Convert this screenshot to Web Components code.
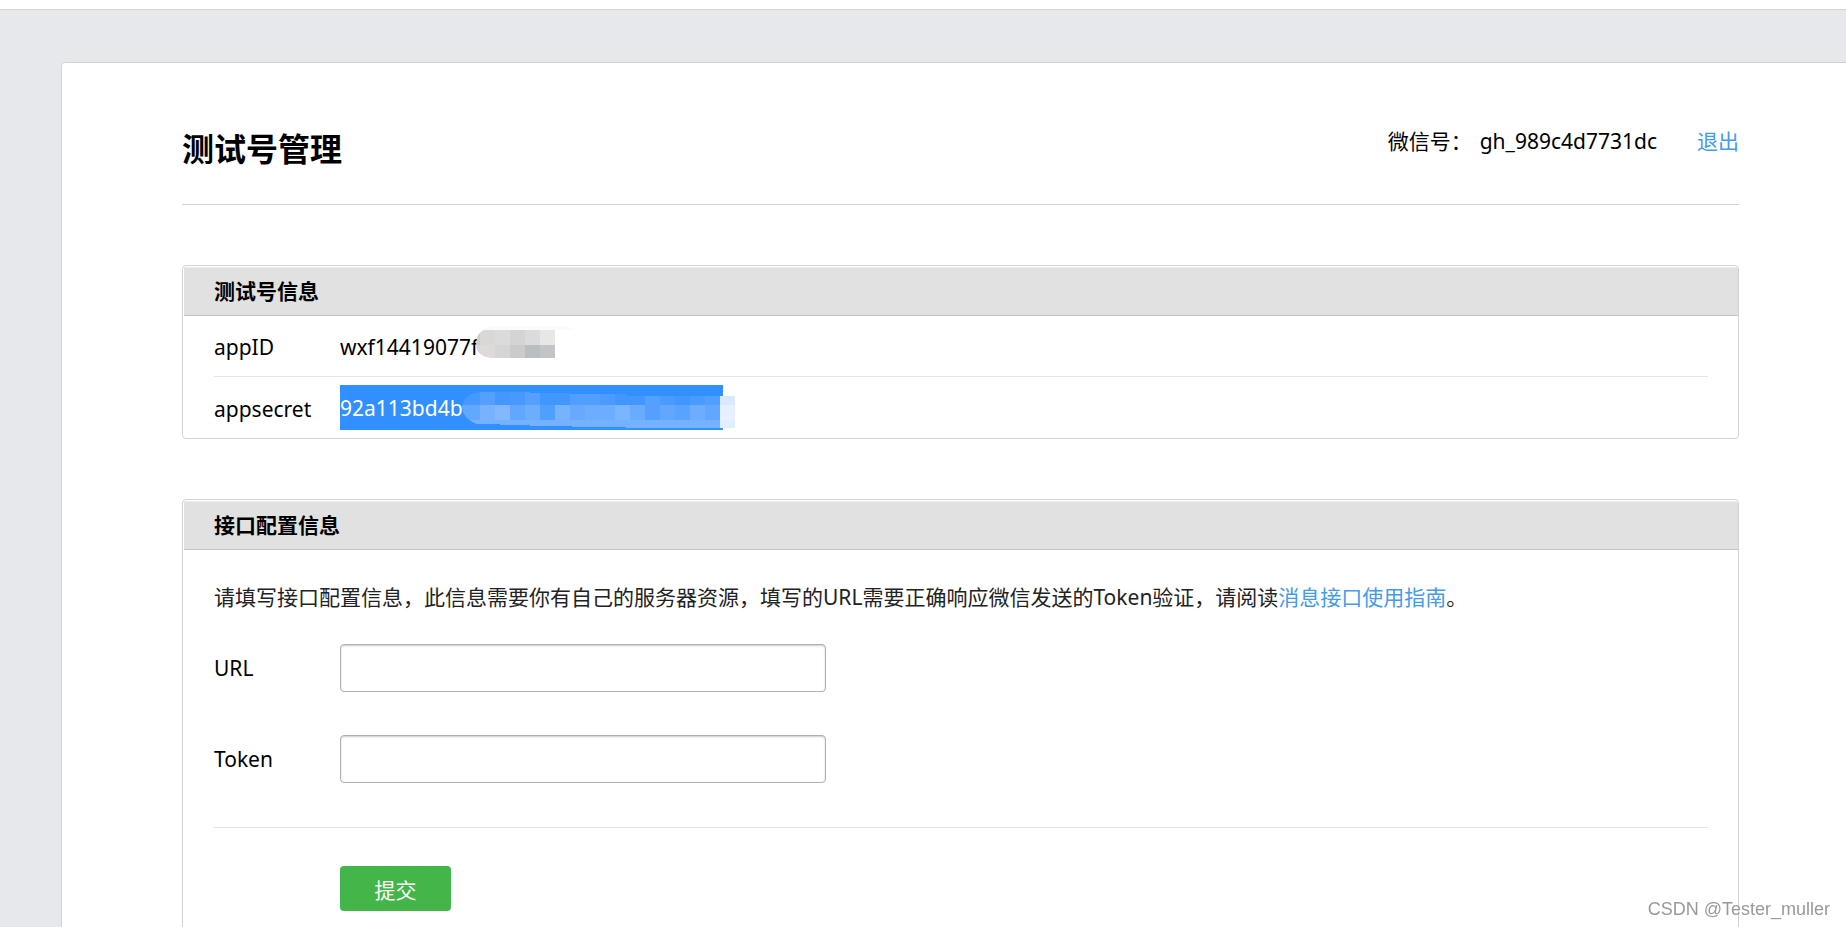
<!DOCTYPE html>
<html lang="zh-CN">
<head>
<meta charset="utf-8">
<title>测试号管理</title>
<style>
  body {
    margin: 0;
    min-height: 100vh;
    overflow: hidden;
    background: #e7e8eb;
    color: #000;
    font: 21px/32px "Noto Sans", "Noto Sans CJK SC", sans-serif;
  }
</style>
</head>
<body>
<sandbox-page>
  <page-header heading="测试号管理" account="gh_989c4d7731dc"></page-header>

  <info-panel heading="测试号信息">
    <info-row label="appID">wxf14419077f<pixel-mask kind="grey"></pixel-mask></info-row>
    <info-row label="appsecret" selected>92a113bd4b<pixel-mask kind="blue"></pixel-mask></info-row>
  </info-panel>

  <info-panel heading="接口配置信息">
    <config-form></config-form>
  </info-panel>
</sandbox-page>
<water-mark>CSDN @Tester_muller</water-mark>

<script>
(function () {
  function attach(el, html) {
    const template = document.createElement("template");
    template.innerHTML = html;
    el.attachShadow({ mode: "open" });
    el.shadowRoot.appendChild(template.content.cloneNode(true));
  }

  class SandboxPage extends HTMLElement {
    constructor() {
      super();
      attach(this, `
        <style>
          :host { display: block; overflow: hidden; }
          .top { height: 9px; background: #fff; border-bottom: 1px solid #d5d6d8; }
          /* the card runs a little past the right side of the window */
          main {
            display: flex;
            flex-direction: column;
            gap: 60px;
            margin: 52px -14px 0 61px;
            padding: 60px 120px;
            border: 1px solid #d3d4d6;
            border-radius: 4px;
            background: #fff;
          }
        </style>
        <div class="top"></div>
        <main><slot></slot></main>
      `);
    }
  }

  class PageHeader extends HTMLElement {
    constructor() {
      super();
      attach(this, `
        <style>
          :host {
            display: flex;
            justify-content: space-between;
            align-items: flex-start;
            height: 81px;
            border-bottom: 1px solid #d3d3d3;
          }
          h1 { margin: 4px 0 0; font-size: 32px; line-height: 44px; }
          .meta { display: flex; padding-top: 2px; }
          .name { margin: 0 40px 0 8px; }
          a { color: #459ae9; text-decoration: none; }
        </style>
        <h1></h1>
        <div class="meta">
          <span>微信号：</span>
          <span class="name"></span>
          <a href="#">退出</a>
        </div>
      `);
    }

    connectedCallback() {
      this.shadowRoot.querySelector("h1").innerText = this.getAttribute("heading");
      this.shadowRoot.querySelector(".name").innerText = this.getAttribute("account");
    }
  }

  class InfoPanel extends HTMLElement {
    constructor() {
      super();
      attach(this, `
        <style>
          :host {
            display: block;
            padding-top: 1px;
            border: 1px solid #d3d3d3;
            border-radius: 4px;
          }
          h2 {
            margin: 0 0 0 1px;
            padding: 8px 30px;
            background: #e1e1e1;
            border-bottom: 1px solid #c2c2c2;
            box-shadow: inset 0 1px 0 #ececec;
            font-size: 21px;
            line-height: 32px;
          }
          .body { padding: 0 30px 0 31px; }
        </style>
        <h2></h2>
        <div class="body"><slot></slot></div>
      `);
    }

    connectedCallback() {
      this.shadowRoot.querySelector("h2").innerText = this.getAttribute("heading");
    }
  }

  class InfoRow extends HTMLElement {
    constructor() {
      super();
      attach(this, `
        <style>
          :host {
            display: flex;
            align-items: center;
            box-sizing: border-box;
            height: 61px;
          }
          :host(:not(:last-child)) { border-bottom: 1px solid #e5e5e5; }
          .label { width: 126px; padding-top: 2px; }
          .value { position: relative; height: 45px; line-height: 47px; }
          :host([selected]) .value { width: 383px; background: #328fff; color: #fff; }
        </style>
        <span class="label"></span>
        <span class="value"><slot></slot></span>
      `);
    }

    connectedCallback() {
      this.shadowRoot.querySelector(".label").innerText = this.getAttribute("label");
    }
  }

  // mosaic laid over the hidden part of a value, in 15px tiles
  const masks = {
    grey: {
      left: 136,
      width: 100,
      clip: "M15 6 H79 V34 H15 Q0 32 0 20 Q1 8 8 6Z",
      extra: '<path d="M4 6 Q8 2 16 2 H88 L100 6Z" fill="#fbfbfb"/>',
      start: -11,
      rows: [
        { y: 6, h: 15, colors: ["#cecdcd", "#d9d8d7", "#dadcdb", "#d4d4d5", "#dadbde", "#e7e7e5"] },
        { y: 21, h: 13, colors: ["#d9d6d6", "#dfd9da", "#d5d5d6", "#cbcbcc", "#b9bec2", "#c3c4c7"] }
      ]
    },
    blue: {
      left: 122,
      width: 273,
      clip: "M18 7 H68 V8 H108 V9 H164 V11 H273 V43 H164 V42 H110 V41 H68 V40 H38 V39 H15 Q0 33 0 21 Q2 9 18 7Z",
      extra: "",
      start: -12,
      rows: [
        { y: 7, h: 13, colors: ["#4399ff", "#4399ff", "#569fff", "#4497ff", "#4799ff", "#559fff", "#4297ff", "#4297ff", "#519eff", "#519eff", "#4c99ff", "#4297ff", "#4197ff", "#559fff", "#4a9bff", "#4197ff", "#4a9bff", "#529eff", "#d9e9ff"] },
        { y: 20, h: 15, colors: ["#62a8ff", "#62a8ff", "#77b1ff", "#82b8ff", "#61a7ff", "#6cadff", "#509fff", "#75b3ff", "#68a9ff", "#6cadff", "#6cadff", "#7ab6ff", "#69abff", "#559fff", "#62a7ff", "#58a3ff", "#6cadff", "#62a7ff", "#e6f0ff"] },
        { y: 35, h: 8, colors: [...Array(18).fill("#74b1ff"), "#e0eeff"] }
      ]
    }
  };

  class PixelMask extends HTMLElement {
    connectedCallback() {
      if (this.shadowRoot) return;
      const mask = masks[this.getAttribute("kind")];
      const tiles = mask.rows.map(row => row.colors.map((color, i) =>
        `<rect x="${mask.start + i * 15}" y="${row.y}" width="15" height="${row.h}" fill="${color}"/>`
      ).join("")).join("");

      attach(this, `
        <style>
          :host { position: absolute; top: 0; left: ${mask.left}px; }
          svg { display: block; }
        </style>
        <svg width="${mask.width}" height="45" shape-rendering="crispEdges" aria-hidden="true">
          <clipPath id="shape"><path d="${mask.clip}"/></clipPath>
          ${mask.extra}
          <g clip-path="url(#shape)">${tiles}</g>
        </svg>
      `);
    }
  }

  class ConfigForm extends HTMLElement {
    constructor() {
      super();
      attach(this, `
        <style>
          :host { display: block; padding: 31px 0 40px; }
          p { margin: 0 0 31px; color: #222; }
          a { color: #459ae9; text-decoration: none; }
          .fields { display: grid; gap: 43px; padding-bottom: 44px; border-bottom: 1px solid #e5e5e5; }
          .actions { padding: 38px 0 0 126px; }
          button {
            display: block;
            width: 111px;
            height: 45px;
            padding: 2px 0 0;
            border: 0;
            border-radius: 4px;
            background: #44b549;
            color: #fff;
            font: inherit;
          }
        </style>
        <p>请填写接口配置信息，此信息需要你有自己的服务器资源，填写的URL需要正确响应微信发送的Token验证，请阅读<a href="#">消息接口使用指南</a>。</p>
        <form>
          <div class="fields">
            <text-field label="URL"></text-field>
            <text-field label="Token"></text-field>
          </div>
          <div class="actions"><button type="button">提交</button></div>
        </form>
      `);
    }
  }

  class TextField extends HTMLElement {
    constructor() {
      super();
      attach(this, `
        <style>
          :host { display: flex; align-items: center; }
          label { width: 126px; }
          input {
            box-sizing: border-box;
            width: 486px;
            height: 48px;
            padding: 0 12px;
            border: 1px solid #b0b0b0;
            border-radius: 4px;
            box-shadow: inset 0 1px 2px #ccc;
            background: #fff;
            font: inherit;
          }
        </style>
        <label for="field"></label>
        <input id="field" type="text">
      `);
    }

    connectedCallback() {
      this.shadowRoot.querySelector("label").innerText = this.getAttribute("label");
    }
  }

  class WaterMark extends HTMLElement {
    constructor() {
      super();
      attach(this, `
        <style>
          :host {
            position: fixed;
            right: 16px;
            bottom: 8px;
            color: #999;
            font: 18px/20px "Liberation Sans", Arial, sans-serif;
            text-shadow: -1px -1px 0 #fff;
          }
        </style>
        <slot></slot>
      `);
    }
  }

  customElements.define("sandbox-page", SandboxPage);
  customElements.define("page-header", PageHeader);
  customElements.define("info-panel", InfoPanel);
  customElements.define("info-row", InfoRow);
  customElements.define("pixel-mask", PixelMask);
  customElements.define("text-field", TextField);
  customElements.define("config-form", ConfigForm);
  customElements.define("water-mark", WaterMark);
})();
</script>
</body>
</html>
